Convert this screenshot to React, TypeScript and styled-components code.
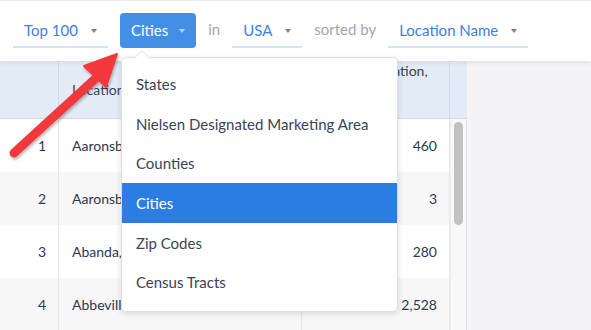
import React from "react";
import styled, { createGlobalStyle } from "styled-components";

const GlobalStyle = createGlobalStyle`
  html, body {
    margin: 0;
    padding: 0;
    background: #ffffff;
    font-family: "Lato", "Open Sans", sans-serif;
  }
  * { box-sizing: border-box; }
`;

const Page = styled.div`
  position: relative;
  display: flex;
  flex-direction: column;
  width: 100vw;
  height: 100vh;
  overflow: hidden;
  border-top: 1px solid #ebebeb;
`;

const TopBar = styled.div`
  position: relative;
  z-index: 2;
  display: flex;
  align-items: center;
  gap: 12px;
  height: 60px;
  padding: 0 0 2px 13px;
  background: #ffffff;
  box-shadow: 0 2px 4px rgba(0, 0, 0, 0.07);
  font-size: 15px;
`;

const Select = styled.div`
  display: inline-flex;
  align-items: center;
  gap: 13px;
  height: 35px;
  padding: 2px 11px 0 11px;
  color: #3f7ee2;
  border-bottom: 2px solid #d4e3f6;
`;

const Caret = styled.span<{ light?: boolean }>`
  width: 0;
  height: 0;
  border-left: 3.5px solid transparent;
  border-right: 3.5px solid transparent;
  border-top: 4px solid ${({ light }) => (light ? "#b5d1f3" : "#7c808a")};
  margin-top: 1px;
`;

const Anchor = styled.div`
  position: relative;
`;

const Button = styled.div`
  display: inline-flex;
  align-items: center;
  gap: 11px;
  height: 35px;
  padding: 0 11px 0 11px;
  background: #4190e6;
  color: #ffffff;
  border-radius: 4px;
`;

const Word = styled.span`
  color: #a3a6ae;
  padding-bottom: 2px;
`;

const Menu = styled.div`
  position: absolute;
  z-index: 5;
  top: 44px;
  left: 1px;
  width: 277px;
  padding: 7px 0 9px;
  background: #ffffff;
  border: 1px solid #dedfe2;
  border-radius: 5px;
  box-shadow: 0 2px 6px rgba(0, 0, 0, 0.12);

  &::before {
    content: "";
    position: absolute;
    top: -8px;
    left: 12px;
    width: 0;
    height: 0;
    border-left: 8px solid transparent;
    border-right: 8px solid transparent;
    border-bottom: 8px solid #dedfe2;
  }
  &::after {
    content: "";
    position: absolute;
    top: -7px;
    left: 13px;
    width: 0;
    height: 0;
    border-left: 7px solid transparent;
    border-right: 7px solid transparent;
    border-bottom: 7px solid #ffffff;
  }
`;

const MenuItem = styled.div<{ active?: boolean }>`
  display: flex;
  align-items: center;
  height: 39.6px;
  padding: 0 14px;
  font-size: 15px;
  white-space: nowrap;
  color: ${({ active }) => (active ? "#ffffff" : "#3d4356")};
  background: ${({ active }) => (active ? "#2b7de1" : "transparent")};
`;

const Content = styled.div`
  flex: 1;
  display: flex;
  min-height: 0;
`;

const TableWrap = styled.div`
  width: 467px;
  display: flex;
  flex-direction: column;
  font-size: 14px;
  color: #2f3753;
`;

const HeaderRow = styled.div`
  display: grid;
  grid-template-columns: 59px 243px 148px 17px;
  height: 61px;
  background: #e3ebf6;
  border-bottom: 1px solid #cedbee;
`;

const HeadCell = styled.div<{ indent?: number }>`
  display: flex;
  align-items: center;
  padding: 0 13px 0 ${({ indent }) => indent ?? 13}px;
  line-height: 19px;
  color: #3b4258;
  border-right: 1px solid #cedbee;
`;

const Body = styled.div`
  flex: 1;
  display: flex;
`;

const Rows = styled.div`
  width: 450px;
`;

const Row = styled.div<{ odd?: boolean }>`
  display: grid;
  grid-template-columns: 59px 243px 148px;
  height: 53px;
  background: ${({ odd }) => (odd ? "#ffffff" : "#f7f7f7")};
`;

const Cell = styled.div<{ right?: boolean }>`
  display: flex;
  align-items: center;
  justify-content: ${({ right }) => (right ? "flex-end" : "flex-start")};
  padding: 0 12px 0 13px;
  white-space: nowrap;
  overflow: hidden;
  border-right: 1px solid #e8e8e8;
`;

const ScrollTrack = styled.div`
  width: 17px;
  padding: 3px 0 0 3px;
  background: #f8f8f8;
  border-left: 1px solid #ececec;
  border-right: 1px solid #dbe3ef;
`;

const Thumb = styled.div`
  width: 9px;
  height: 103px;
  border-radius: 5px;
  background: #c1c1c1;
`;

const Side = styled.div`
  flex: 1;
  background: #f4f4f6;
`;

const ArrowLayer = styled.svg`
  position: absolute;
  z-index: 10;
  left: 0;
  top: 0;
  pointer-events: none;
`;

const rows = [
  { n: 1, name: "Aaronsburg, PA", pop: "460" },
  { n: 2, name: "Aaronsburg, PA", pop: "3" },
  { n: 3, name: "Abanda, AL", pop: "280" },
  { n: 4, name: "Abbeville, AL", pop: "2,528" },
];

const levels = [
  "States",
  "Nielsen Designated Marketing Area",
  "Counties",
  "Cities",
  "Zip Codes",
  "Census Tracts",
];

export default function App() {
  return (
    <>
      <GlobalStyle />
      <Page>
        <TopBar>
          <Select>
            Top 100 <Caret />
          </Select>
          <Anchor>
            <Button>
              Cities <Caret light />
            </Button>
            <Menu>
              {levels.map((l) => (
                <MenuItem key={l} active={l === "Cities"}>
                  {l}
                </MenuItem>
              ))}
            </Menu>
          </Anchor>
          <Word>in</Word>
          <Select>
            USA <Caret />
          </Select>
          <Word>sorted by</Word>
          <Select>
            Location Name <Caret />
          </Select>
        </TopBar>
        <Content>
          <TableWrap>
            <HeaderRow>
              <HeadCell />
              <HeadCell>Location Name</HeadCell>
              <HeadCell indent={23}>
                Total Population,
                <br />
                2010
                <br />
                Census
              </HeadCell>
              <HeadCell />
            </HeaderRow>
            <Body>
              <Rows>
                {rows.map((r) => (
                  <Row key={r.n} odd={r.n % 2 === 1}>
                    <Cell right>{r.n}</Cell>
                    <Cell>{r.name}</Cell>
                    <Cell right>{r.pop}</Cell>
                  </Row>
                ))}
              </Rows>
              <ScrollTrack>
                <Thumb />
              </ScrollTrack>
            </Body>
          </TableWrap>
          <Side />
        </Content>
        <ArrowLayer width="591" height="330" viewBox="0 0 591 330">
          <defs>
            <filter id="arrowShadow" x="-20%" y="-20%" width="140%" height="140%">
              <feDropShadow dx="1" dy="2" stdDeviation="1.5" floodColor="#000" floodOpacity="0.3" />
            </filter>
          </defs>
          <g filter="url(#arrowShadow)" fill="#f2383d" stroke="#f2383d">
            <line x1="14" y1="152" x2="96" y2="77" strokeWidth="9" strokeLinecap="round" />
            <polygon points="117,53 84,65 106,86" strokeWidth="2" strokeLinejoin="round" />
          </g>
        </ArrowLayer>
      </Page>
    </>
  );
}
